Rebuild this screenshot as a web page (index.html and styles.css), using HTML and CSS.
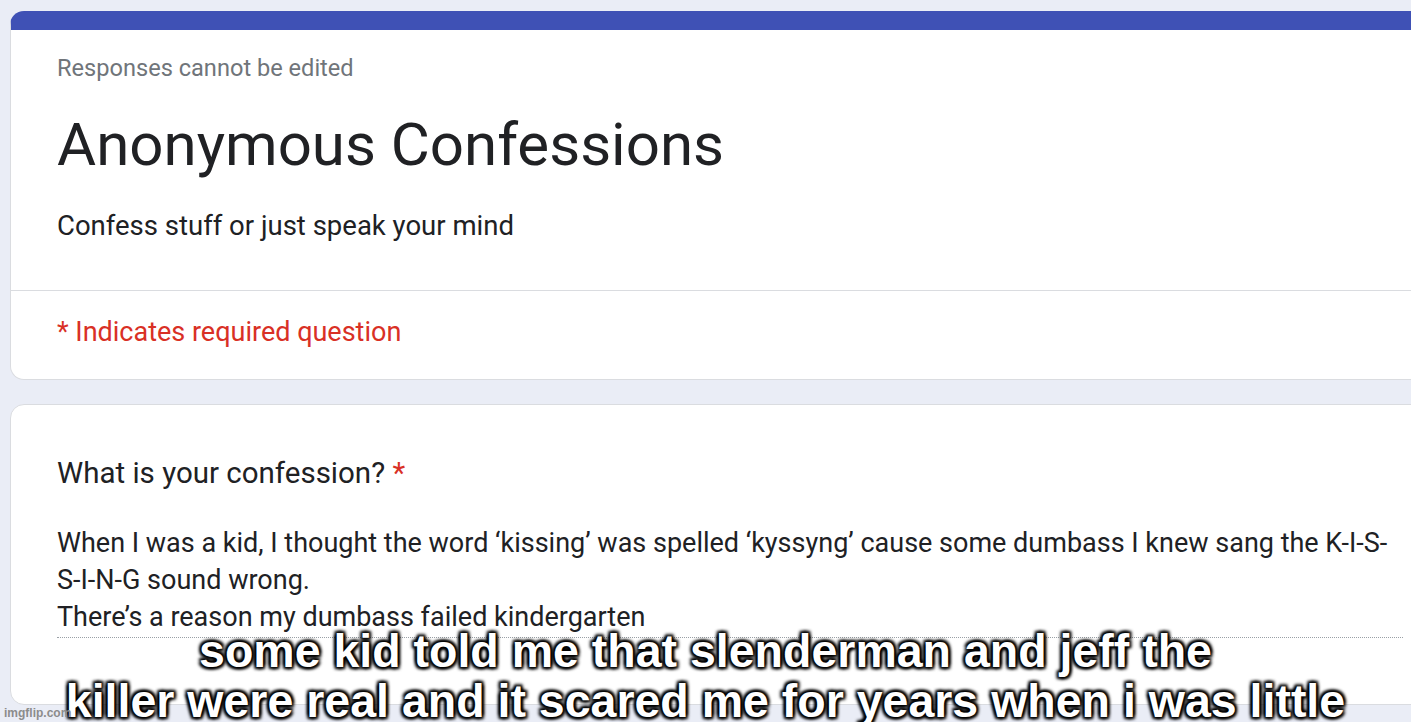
FILE: index.html
```html
<!DOCTYPE html>
<html lang="en">
<head>
    <meta charset="UTF-8">
    <title>Anonymous Confessions</title>
    <link rel="stylesheet" href="styles.css">
</head>
<body>
    <div class="form">
        <div class="card header-card">
            <div class="header-top">
                <div class="note">Responses cannot be edited</div>
                <h1 class="title">Anonymous Confessions</h1>
                <div class="desc">Confess stuff or just speak your mind</div>
            </div>
            <div class="required">* Indicates required question</div>
        </div>

        <div class="card question-card">
            <div class="question">What is your confession? <span class="star">*</span></div>
            <div class="answer">
                When I was a kid, I thought the word ‘kissing’ was spelled ‘kyssyng’ cause some dumbass I knew sang the K-I-S-S-I-N-G sound wrong.<br>
                There’s a reason my dumbass failed kindergarten
            </div>
        </div>
    </div>

    <!-- meme caption drawn over the screenshot -->
    <div class="caption">some kid told me that slenderman and jeff the<br>killer were real and it scared me for years when i was little</div>
    <div class="watermark">imgflip.com</div>
</body>
</html>
```

FILE: styles.css
```css
html, body {
    margin: 0;
    padding: 0;
    height: 722px;
    overflow: hidden;
}
body {
    background-color: #eaedf6;
    font-family: Roboto, Arial, sans-serif;
    color: #202124;
    position: relative;
}
.form {
    padding: 11px 0 0 10px;
    width: 1440px;
}
.card {
    background-color: #fff;
    border-radius: 14px;
    border: 1px solid #dadce0;
    margin-bottom: 24px;
    box-sizing: border-box;
}
.header-card {
    border-top: 19px solid #3f51b5;
    height: 369px;
}
.header-top {
    padding: 24px 46px 0;
    height: 261px;
    box-sizing: border-box;
    border-bottom: 1px solid #dadce0;
}
.note {
    font-size: 23.6px;
    line-height: 28px;
    color: #70757a;
}
.title {
    font-weight: 400;
    font-size: 60px;
    margin: 27px 0 0;
    line-height: 72px;
}
.desc {
    font-size: 27.5px;
    line-height: 32px;
    margin-top: 29px;
}
.required {
    color: #d93025;
    font-size: 27px;
    line-height: 32px;
    padding: 25px 46px 0;
}
.question-card {
    height: 301px;
    padding: 51px 46px 0;
}
.question {
    font-size: 29.5px;
    line-height: 35px;
}
.star {
    color: #d93025;
}
.answer {
    font-size: 27px;
    line-height: 37px;
    margin-top: 34px;
    padding-bottom: 1px;
    border-bottom: 1px dotted #9aa0a6;
}
.caption {
    position: absolute;
    left: 0;
    right: 0;
    top: 626px;
    text-align: center;
    font-family: "Liberation Sans", Arial, sans-serif;
    font-weight: bold;
    font-size: 46.5px;
    line-height: 50px;
    color: #fff;
    text-shadow: 2px 2px 3px #000, -2px -2px 3px #000, 2px -2px 3px #000, -2px 2px 3px #000, 0 0 5px #000;
}
.watermark {
    position: absolute;
    left: 4px;
    bottom: 2px;
    font-family: "Liberation Sans", Arial, sans-serif;
    font-weight: bold;
    font-size: 12px;
    color: #8c8c8c;
}
```
